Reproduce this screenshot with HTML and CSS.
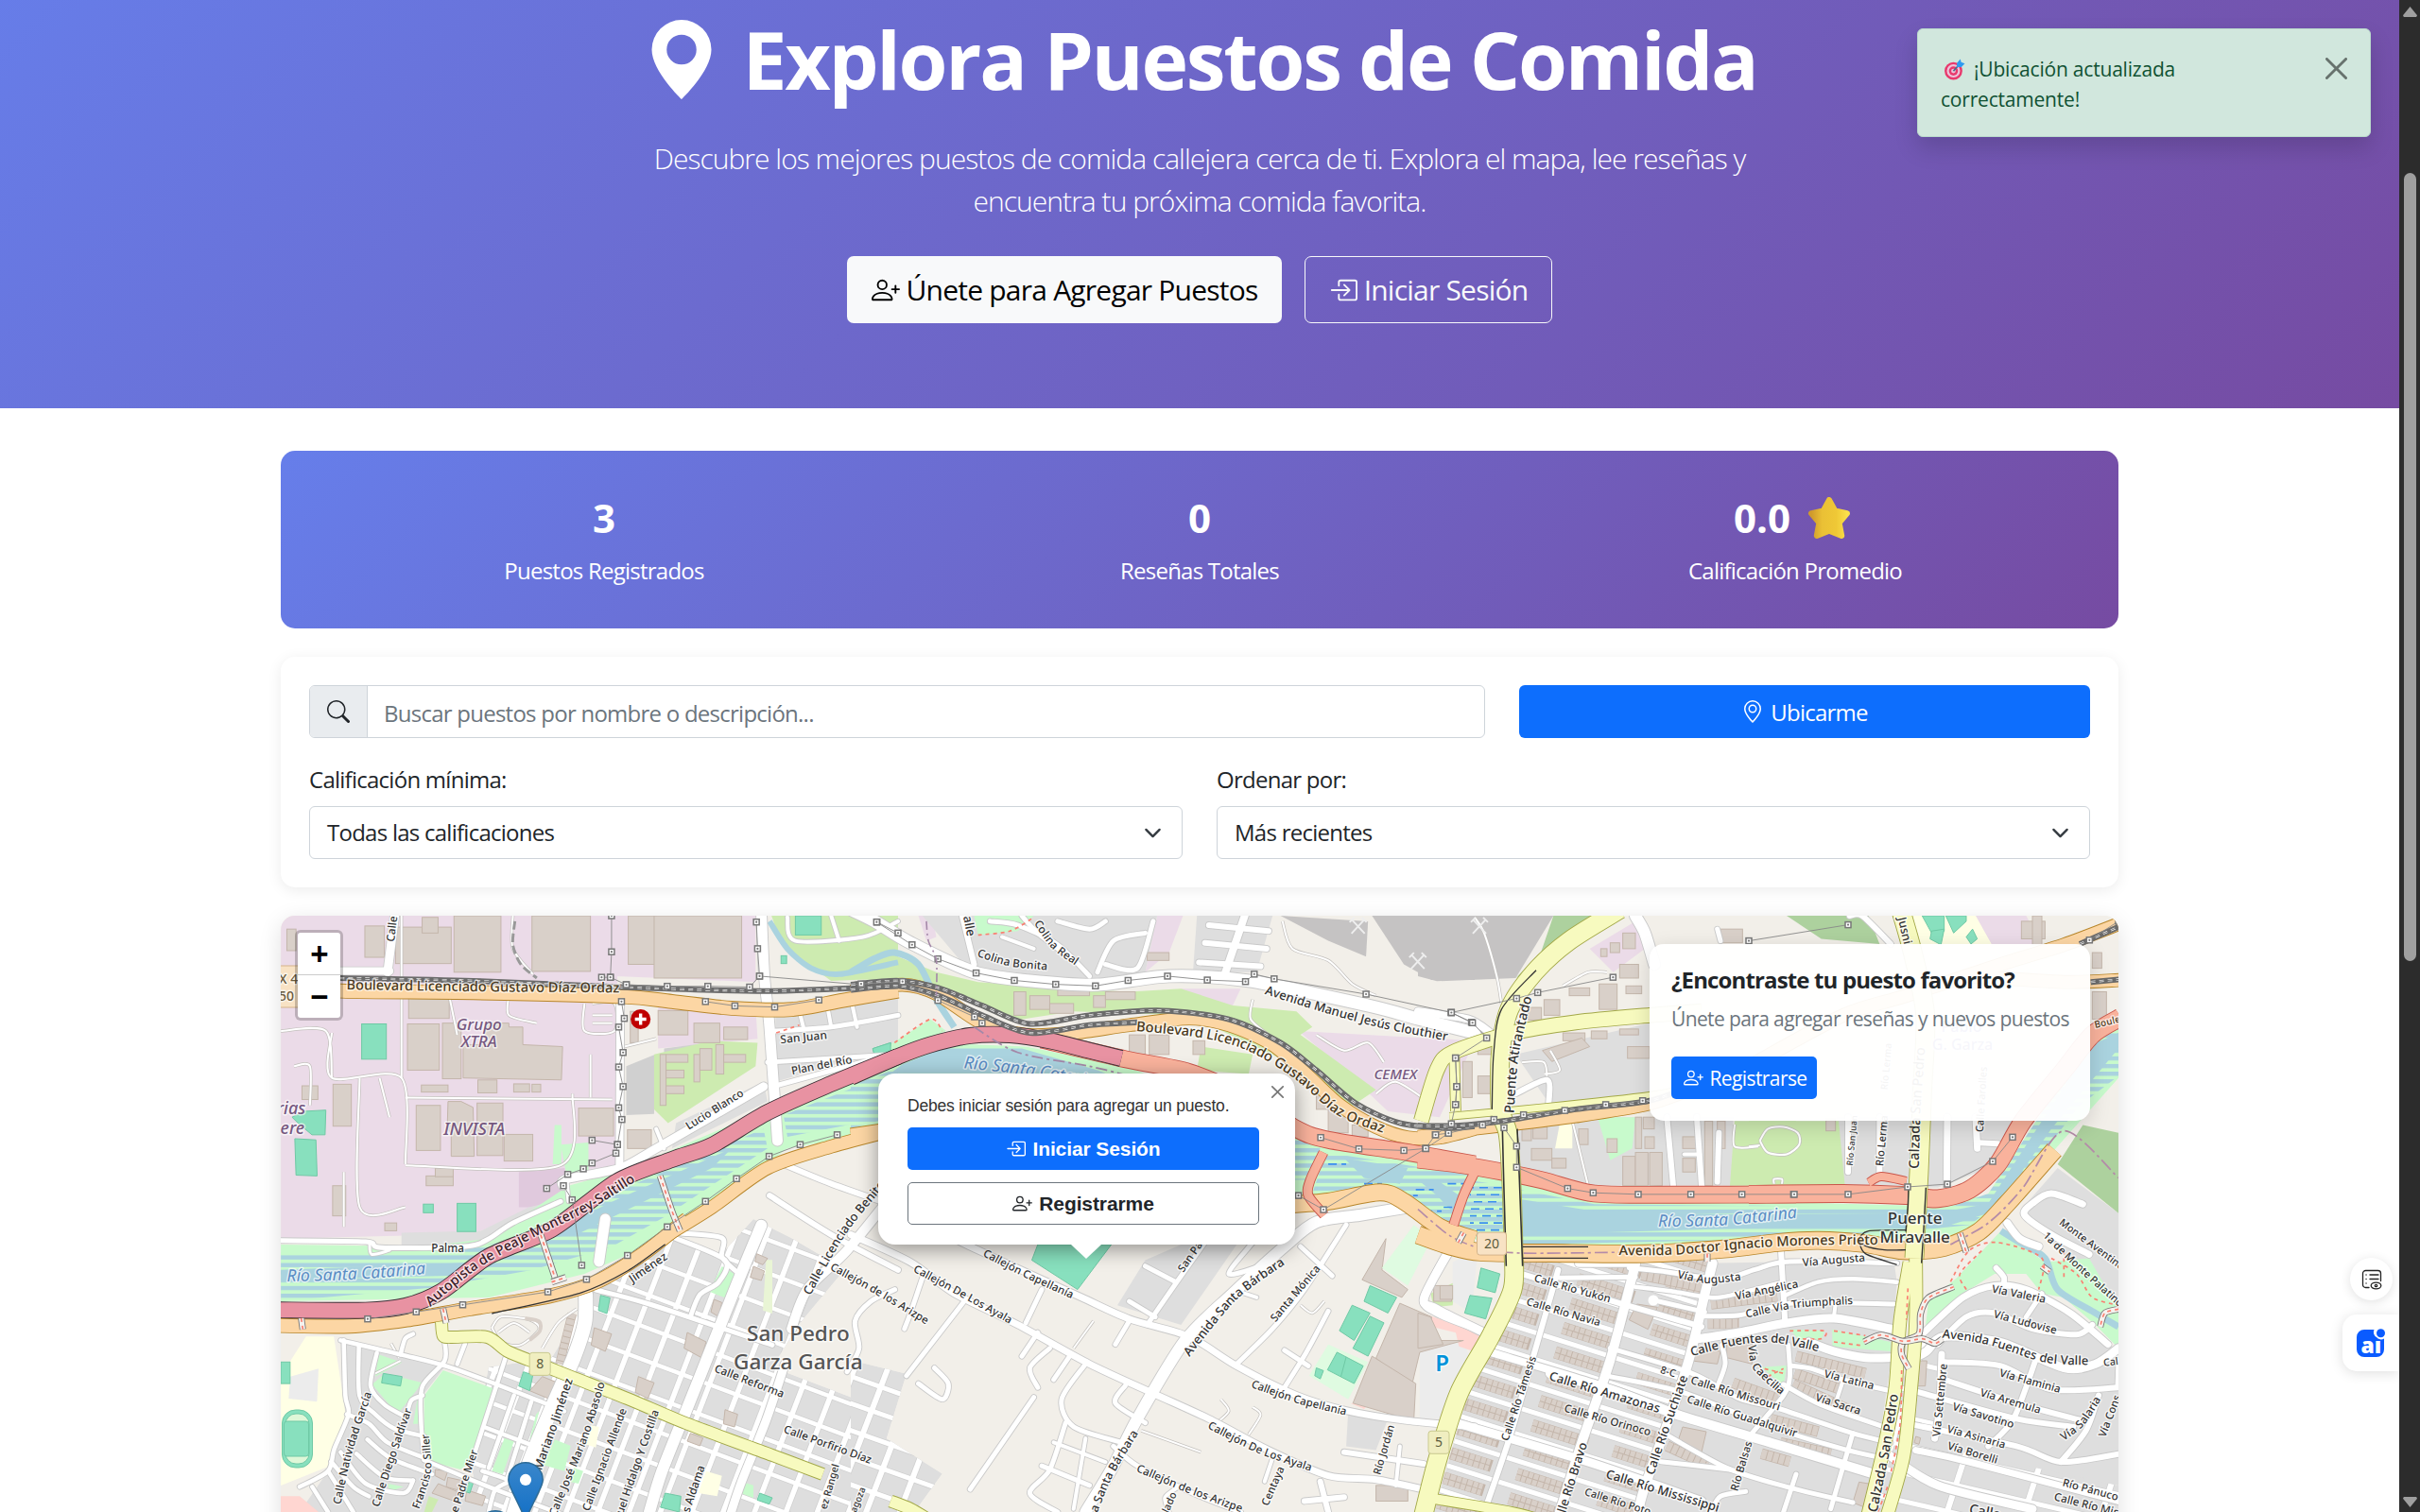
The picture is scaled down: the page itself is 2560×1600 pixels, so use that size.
FILE: index.html
```html
<!DOCTYPE html>
<html lang="es">
<head>
<meta charset="utf-8">
<title>Explora Puestos de Comida</title>
<link rel="stylesheet" href="styles.css">
</head>
<body>
<svg class="sprite" aria-hidden="true">
  <symbol id="geo-fill" viewBox="0 0 16 16"><path d="M8 16s6-5.686 6-10A6 6 0 0 0 2 6c0 4.314 6 10 6 10zm0-7a3 3 0 1 1 0-6 3 3 0 0 1 0 6z"/></symbol>
  <symbol id="geo" viewBox="0 0 16 16"><path d="M12.166 8.94c-.524 1.062-1.234 2.12-1.96 3.07A31.493 31.493 0 0 1 8 14.58a31.481 31.481 0 0 1-2.206-2.57c-.726-.95-1.436-2.008-1.96-3.07C3.304 7.867 3 6.862 3 6a5 5 0 0 1 10 0c0 .862-.305 1.867-.834 2.94zM8 16s6-5.686 6-10A6 6 0 0 0 2 6c0 4.314 6 10 6 10z"/><path d="M8 8a2 2 0 1 1 0-4 2 2 0 0 1 0 4zm0 1a3 3 0 1 0 0-6 3 3 0 0 0 0 6z"/></symbol>
  <symbol id="person-plus" viewBox="0 0 16 16"><path d="M6 8a3 3 0 1 0 0-6 3 3 0 0 0 0 6zm2-3a2 2 0 1 1-4 0 2 2 0 0 1 4 0zm4 8c0 1-1 1-1 1H1s-1 0-1-1 1-4 6-4 6 3 6 4zm-1-.004c-.001-.246-.154-.986-.832-1.664C9.516 10.68 8.289 10 6 10c-2.29 0-3.516.68-4.168 1.332-.678.678-.83 1.418-.832 1.664h10z"/><path d="M13.5 5a.5.5 0 0 1 .5.5V7h1.5a.5.5 0 0 1 0 1H14v1.5a.5.5 0 0 1-1 0V8h-1.5a.5.5 0 0 1 0-1H13V5.5a.5.5 0 0 1 .5-.5z"/></symbol>
  <symbol id="login" viewBox="0 0 16 16"><path d="M6 3.5a.5.5 0 0 1 .5-.5h8a.5.5 0 0 1 .5.5v9a.5.5 0 0 1-.5.5h-8a.5.5 0 0 1-.5-.5v-2a.5.5 0 0 0-1 0v2A1.5 1.5 0 0 0 6.500 14h8a1.500 1.500 0 0 0 1.500-1.500v-9A1.500 1.500 0 0 0 14.500 2h-8A1.500 1.500 0 0 0 5 3.500v2a.5.5 0 0 0 1 0v-2z"/><path d="M11.854 8.354a.5.5 0 0 0 0-.708l-3-3a.5.5 0 1 0-.708.708L10.293 7.500H1.500a.5.5 0 0 0 0 1h8.793l-2.147 2.146a.5.5 0 0 0 .708.708l3-3z"/></symbol>
  <symbol id="search" viewBox="0 0 16 16"><path d="M11.742 10.344a6.500 6.500 0 1 0-1.397 1.398h-.001c.03.04.062.078.098.115l3.850 3.850a1 1 0 0 0 1.415-1.414l-3.850-3.850a1.007 1.007 0 0 0-.115-.1zM12 6.500a5.500 5.500 0 1 1-11 0 5.500 5.500 0 0 1 11 0z"/></symbol>
  <symbol id="close" viewBox="0 0 16 16"><path d="M.293.293a1 1 0 0 1 1.414 0L8 6.586 14.293.293a1 1 0 1 1 1.414 1.414L9.414 8l6.293 6.293a1 1 0 0 1-1.414 1.414L8 9.414l-6.293 6.293a1 1 0 0 1-1.414-1.414L6.586 8 .293 1.707a1 1 0 0 1 0-1.414z"/></symbol>
  <symbol id="chevron" viewBox="0 0 16 16"><path d="M2 5l6 6 6-6" fill="none" stroke="#343a40" stroke-width="2" stroke-linecap="round" stroke-linejoin="round"/></symbol>
</svg>

<div class="page">
  <header class="hero">
    <h1 class="hero-title"><svg class="hero-pin"><use href="#geo-fill"/></svg><span>Explora Puestos de Comida</span></h1>
    <p class="hero-lead"><span>Descubre los mejores puestos de comida callejera cerca de ti. Explora el mapa, lee reseñas y</span><br><span>encuentra tu próxima comida favorita.</span></p>
    <div class="hero-actions">
      <a class="btn btn-lg btn-light"><svg class="icon"><use href="#person-plus"/></svg><span>Únete para Agregar Puestos</span></a>
      <a class="btn btn-lg btn-ghost"><svg class="icon"><use href="#login"/></svg><span>Iniciar Sesión</span></a>
    </div>
  </header>

  <main class="container">
    <section class="stats">
      <div class="stat"><strong>3</strong><span>Puestos Registrados</span></div>
      <div class="stat"><strong>0</strong><span>Reseñas Totales</span></div>
      <div class="stat stat-rating"><strong>0.0
        <svg class="star" viewBox="0 0 44 43"><defs><linearGradient id="gold" x1="0" y1="0" x2="1" y2="0"><stop offset="0" stop-color="#cf9a2c"/><stop offset=".3" stop-color="#eac035"/><stop offset=".7" stop-color="#efc836"/><stop offset="1" stop-color="#fbe04a"/></linearGradient></defs><path d="M22 3 28 14 40 16.500 32 26 34.500 39 22 34 9.500 39 12 26 4 16.500 16 14Z" fill="url(#gold)" stroke="url(#gold)" stroke-width="6" stroke-linejoin="round"/></svg></strong><span>Calificación Promedio</span></div>
    </section>

    <section class="filters">
      <div class="search-row">
        <div class="input-group">
          <span class="addon"><svg class="icon"><use href="#search"/></svg></span>
          <span class="field">Buscar puestos por nombre o descripción...</span>
        </div>
        <a class="btn btn-primary btn-locate"><svg class="icon"><use href="#geo"/></svg><span>Ubicarme</span></a>
      </div>
      <div class="select-row">
        <div class="select-col"><label>Calificación mínima:</label><div class="select"><span>Todas las calificaciones</span><svg><use href="#chevron"/></svg></div></div>
        <div class="select-col"><label>Ordenar por:</label><div class="select"><span>Más recientes</span><svg><use href="#chevron"/></svg></div></div>
      </div>
    </section>

    <section class="map-wrap">
      <div class="map">
        <svg id="map" class="map-canvas" viewBox="297 969 1944 900"></svg>
        <div class="zoom-control"><span>+</span><span>−</span></div>
        <svg class="marker marker-b" viewBox="0 0 25 41"><use href="#pin"/></svg>
        <svg class="marker" viewBox="0 0 25 41"><defs><linearGradient id="pinblue" x1="0" y1="0" x2="0" y2="1"><stop offset="0" stop-color="#3a87cb"/><stop offset="1" stop-color="#126fc6"/></linearGradient></defs><g id="pin"><path d="M12.500.5C5.800.5.5 5.900.5 12.500c0 2.800 1.800 6.300 2.700 8.200l9.300 19.500 9.300-19.500c.9-1.900 2.700-5.400 2.700-8.200C24.500 5.900 19.200.5 12.500.5Z" fill="url(#pinblue)" stroke="#2e6c97"/><circle cx="12.500" cy="12.500" r="4" fill="#fff"/></g></svg>
        <div class="popup">
          <svg class="popup-close"><use href="#close"/></svg>
          <p>Debes iniciar sesión para agregar un puesto.</p>
          <a class="btn btn-sm btn-primary"><svg class="icon"><use href="#login"/></svg><span>Iniciar Sesión</span></a>
          <a class="btn btn-sm btn-outline"><svg class="icon"><use href="#person-plus"/></svg><span>Registrarme</span></a>
          <i class="popup-tip"></i>
        </div>
        <div class="cta">
          <h6>¿Encontraste tu puesto favorito?</h6>
          <p>Únete para agregar reseñas y nuevos puestos</p>
          <a class="btn btn-sm btn-primary"><svg class="icon"><use href="#person-plus"/></svg><span>Registrarse</span></a>
        </div>
      </div>
    </section>
  </main>
</div>

<aside class="toast">
  <div><svg class="dart" viewBox="0 0 22 22"><circle cx="10" cy="12.500" r="9" fill="#e8396d"/><circle cx="10" cy="12.500" r="6.700" fill="#ecc4da"/><circle cx="10" cy="12.500" r="4.600" fill="#e8396d"/><circle cx="10" cy="12.500" r="2.300" fill="#ecc4da"/><path d="M10 12.500 16 6" stroke="#4a6b8a" stroke-width="1.600"/><path d="M13.500 8.500V4.500L17 .5l.8 3.200L21.500 5 18 8.500Z" fill="#2f9af0"/></svg><span>¡Ubicación actualizada</span><br><span>correctamente!</span></div>
  <svg class="toast-close"><use href="#close"/></svg>
</aside>

<div class="side-tools">
  <span class="tool-round"><svg viewBox="0 0 22 22" fill="none" stroke="#222" stroke-width="1.300" stroke-linecap="round"><path d="M8 19.500H4.500a3 3 0 0 1-3-3v-12a3 3 0 0 1 3-3h13a3 3 0 0 1 3 3V12.500"/><path d="M9 6h9M9 10.500h9M5 6h.1M5 10.500h.1M5 15h.1"/><ellipse cx="15.500" cy="17.500" rx="5.300" ry="3.300"/><circle cx="15.500" cy="17.500" r="1.200"/></svg></span>
  <span class="tool-ai"><svg viewBox="0 0 30 30"><path d="M8 1H18.500a6 6 0 0 0 2.500 8 6 6 0 0 0 8 1.500V22a8 8 0 0 1-8 8H8a8 8 0 0 1-8-8V9a8 8 0 0 1 8-8Z" fill="#0a5bff"/><circle cx="25.500" cy="4.700" r="4.500" fill="#0a5bff"/><text x="4.500" y="25.500">aı</text></svg></span>
</div>

<div class="scrollbar"><i class="arrow up"></i><i class="thumb"></i><i class="arrow down"></i></div>
<script src="map.js"></script>
</body>
</html>
```
FILE: styles.css
```css
* { box-sizing: border-box; }
html, body { height: 1600px; overflow: hidden; }
body { margin: 0; background: #fff; color: #212529; font: 24px/36px "Open Sans", "Noto Sans", sans-serif; display: flex; }
h1, h6, p { margin: 0; }
.sprite { position: absolute; width: 0; height: 0; }
.page { width: 2538px; height: 1600px; overflow: hidden; flex: none; }
.icon { width: 1em; height: 1em; fill: currentColor; flex: none; }

.hero { height: 506px; margin-top: -74px; padding-top: 90px; background: linear-gradient(135deg, #667eea 0%, #764ba2 100%); color: #fff; display: flex; flex-direction: column; align-items: center; }
.hero-title { display: flex; align-items: center; gap: 22px; height: 101px; font-size: 84px; line-height: 101px; font-weight: 700; letter-spacing: -2.300px; }
.hero-title span { margin-top: -9px; }
.hero-pin { width: 84px; height: 84px; fill: #fff; margin-top: -8px; }
.hero-lead { margin-top: 28px; text-align: center; font-size: 30px; line-height: 45px; font-weight: 300; letter-spacing: -.97px; }
.hero-actions { display: flex; gap: 24px; margin-top: 36px; }

.btn { display: flex; align-items: center; justify-content: center; gap: 7px; border: 1px solid transparent; border-radius: 6px; white-space: nowrap; letter-spacing: -.75px; }
.btn-lg { height: 71px; font-size: 30px; border-radius: 7px; letter-spacing: -.78px; padding-top: 1px; }
.btn-light { width: 460px; background: #f8f9fa; color: #000; }
.btn-ghost { width: 262px; border-color: #f8f9fa; color: #f8f9fa; }
.btn-primary { background: #0d6efd; color: #fff; }
.btn-outline { border-color: #6c757d; color: #212529; }
.btn-sm { height: 45px; font-size: 21px; border-radius: 5px; letter-spacing: -.6px; }

.container { width: 1944px; margin: 45px auto 0; display: flex; flex-direction: column; gap: 30px; }
.stats { height: 188px; border-radius: 15px; padding: 46px 27px 0; display: grid; grid-template-columns: repeat(3, 630px); background: linear-gradient(135deg, #667eea 0%, #764ba2 100%); color: #fff; text-align: center; }
.stat { display: flex; flex-direction: column; align-items: center; }
.stat strong { display: flex; align-items: center; gap: 18px; height: 50px; font-size: 42px; line-height: 50px; }
.stat-rating strong { margin-right: 6px; }
.star { width: 46px; height: 45px; }
.stat span { margin-top: 13px; letter-spacing: -.76px; }

.filters { height: 244px; border-radius: 15px; padding: 30px; background: #fff; box-shadow: 0 3px 15px rgba(0,0,0,.08); }
.search-row { display: flex; gap: 36px; }
.input-group { display: flex; width: 1244px; height: 56px; border: 1px solid #ced4da; border-radius: 6px; overflow: hidden; }
.addon { width: 61px; background: #e9ecef; border-right: 1px solid #ced4da; display: flex; align-items: center; justify-content: center; }
.field { padding: 11px 17px; color: #6c757d; letter-spacing: -.75px; }
.btn-locate { width: 604px; height: 56px; }
.btn-locate span { padding-top: 2px; }
.select-row { display: flex; gap: 36px; margin-top: 26px; }
.select-col { width: 924px; letter-spacing: -.74px; }
.select-col label { display: block; height: 46px; }
.select { height: 56px; border: 1px solid #ced4da; border-radius: 6px; display: flex; align-items: center; justify-content: space-between; padding: 0 21px 0 18px; }
.select svg { width: 19px; height: 19px; }

.map-wrap { height: 900px; border-radius: 15px; box-shadow: 0 6px 24px rgba(0,0,0,.12); }
.map { position: relative; height: 900px; border-radius: 15px; overflow: hidden; background: #f2efe9; }
.map-canvas { display: block; width: 1944px; height: 900px; font-family: "Noto Sans", sans-serif; }
.map-canvas text { paint-order: stroke; stroke: rgba(255,255,255,.65); stroke-width: 3px; stroke-linejoin: round; }
.zoom-control { position: absolute; left: 15px; top: 15px; width: 51px; border: 3px solid rgba(0,0,0,.2); border-radius: 6px; background: #fff; background-clip: padding-box; }
.zoom-control span { display: block; height: 45px; padding-left: 1px; text-align: center; font: bold 33px/45px "Liberation Sans", sans-serif; color: #000; }
.zoom-control span:first-child { border-bottom: 1px solid #ccc; }
.marker { position: absolute; left: 240px; top: 578px; width: 38px; height: 62px; }
.marker-b { left: 208px; top: 629px; }

.popup { position: absolute; left: 632px; top: 167px; width: 441px; height: 181px; border-radius: 18px; background: #fff; box-shadow: 0 5px 21px rgba(0,0,0,.4); padding: 24px 38px 0 31px; display: flex; flex-direction: column; gap: 13px; font-family: "Liberation Sans", sans-serif; }
.popup p { font-size: 17.500px; line-height: 21px; color: #333; letter-spacing: -.18px; margin-bottom: -1px; white-space: nowrap; }
.popup .btn { font-weight: 700; letter-spacing: -.1px; flex: none; }
.popup-close { position: absolute; right: 12px; top: 13px; width: 13px; height: 13px; fill: #757575; }
.popup-tip { position: absolute; left: 204px; top: 181px; width: 32px; height: 15px; background: #fff; clip-path: polygon(0 0, 100% 0, 50% 100%); }
.cta { position: absolute; left: 1448px; top: 30px; width: 466px; height: 187px; padding: 20px 23px; border-radius: 15px; background: rgba(255,255,255,.95); box-shadow: 0 6px 22px rgba(0,0,0,.15); white-space: nowrap; }
.cta h6 { font-size: 24px; line-height: 36px; letter-spacing: -.86px; }
.cta p { font-size: 21px; line-height: 32px; margin-top: 7px; color: #6c757d; letter-spacing: -.62px; }
.cta .btn { width: 154px; margin-top: 24px; padding-left: 2px; }

.toast { position: absolute; left: 2028px; top: 30px; width: 480px; height: 115px; padding: 26px 24px 0; display: flex; justify-content: space-between; background: #d1e7dd; border: 1px solid #badbcc; border-radius: 6px; color: #0f5132; font-size: 21px; line-height: 32px; letter-spacing: -.2px; box-shadow: 0 12px 24px rgba(0,0,0,.15); }
.dart { width: 23px; height: 23px; margin: 0 9px 0 3px; vertical-align: -4px; }
.toast-close { width: 23px; height: 23px; margin-top: 4px; opacity: .5; }

.side-tools { position: absolute; right: 22px; top: 1331px; display: flex; flex-direction: column; align-items: flex-end; gap: 15px; }
.tool-round { width: 45px; height: 45px; margin-right: 7px; border-radius: 50%; background: #fff; box-shadow: 0 2px 12px rgba(0,0,0,.12); display: grid; place-items: center; }
.tool-round svg { width: 22px; height: 22px; }
.tool-ai { width: 60px; height: 60px; border-radius: 15px 0 0 15px; background: #fff; box-shadow: 0 2px 14px rgba(0,0,0,.13); padding: 15px; }
.tool-ai svg { display: block; width: 30px; height: 30px; overflow: visible; }
.tool-ai text { font: 800 23px "Open Sans", sans-serif; fill: #fff; }
.scrollbar { position: relative; width: 22px; height: 1600px; background: #2c2c2c; flex: none; }
.thumb { position: absolute; left: 5px; top: 183px; width: 13px; height: 834px; border-radius: 7px; background: #9f9f9f; }
.arrow { position: absolute; left: 4px; width: 15px; height: 11px; background: #9f9f9f; clip-path: polygon(50% 0, 100% 85%, 94% 100%, 6% 100%, 0 85%); }
.up { top: 7px; }
.down { bottom: 5px; transform: scaleY(-1); }
```
FILE: map.js
```js
// Street map: survey sheets (origin and scale) and the features drawn on them.
const NS = 'http://www.w3.org/2000/svg';
const svg = document.getElementById('map');
const sheets = { W: [290, 950, 2.3758, 2.412], C: [900, 950, 2.3758, 2.412], E: [1500, 950, 3, 2.412], F: [1850, 950, 3, 2.412], Q: [297, 1290, 3, 3], R: [1640, 1190, 3, 3] };
let uid = 0;

function el(name, attrs, parent = svg) {
  const node = document.createElementNS(NS, name);
  for (const k in attrs) node.setAttribute(k, attrs[k]);
  parent.appendChild(node);
  return node;
}
function pts(sheet, str) {
  const [ox, oy, sx, sy] = sheets[sheet];
  return str.trim().split(/\s+/).map(p => { const [x, y] = p.split(','); return [ox + x / sx, oy + y / sy]; });
}
function smooth(p) {
  if (p.length < 3) return 'M' + p.map(q => q.join(' ')).join('L');
  let d = 'M' + p[0].join(' ');
  for (let i = 0; i < p.length - 1; i++) {
    const a = p[i - 1] || p[i], b = p[i], c = p[i + 1], e = p[i + 2] || c, t = 7;
    d += `C${b[0] + (c[0] - a[0]) / t} ${b[1] + (c[1] - a[1]) / t} ${c[0] - (e[0] - b[0]) / t} ${c[1] - (e[1] - b[1]) / t} ${c[0]} ${c[1]}`;
  }
  return d;
}
function area(fill, list, stroke = 'none') {
  list.forEach(([s, str]) => el('polygon', { points: pts(s, str).map(q => q.join(',')).join(' '), fill, stroke, 'stroke-width': 1 }));
}
function boxes(fill, stroke, s, list) {
  list.trim().split(/\s+/).forEach(b => {
    const [x1, y1, x2, y2] = b.split(',');
    const [[a, c], [d, e]] = pts(s, `${x1},${y1} ${x2},${y2}`);
    el('rect', { x: a, y: c, width: d - a, height: e - c, fill, stroke });
  });
}
function line(s, str, w, color, extra = {}) {
  return el('path', { d: smooth(pts(s, str)), fill: 'none', stroke: color, 'stroke-width': w, 'stroke-linejoin': 'round', ...extra });
}
function roads(color, casing, list, cap = 'round') {
  list.forEach(([s, w, str]) => line(s, str, w + 1.8, casing, { 'stroke-linecap': cap }));
  list.forEach(([s, w, str]) => line(s, str, w, color, { 'stroke-linecap': cap }));
}
// Rows of terraced houses along a line.
function terraces(s, w, list) {
  list.forEach(p => {
    line(s, p, w + 1.4, '#c4b6ab');
    line(s, p, w, '#d9d0c9', { 'stroke-dasharray': '5.5 1' });
  });
}
// A residential district: blocks, rows of houses and a skewed street grid clipped to its outline.
function district(s, outline, a, da, b, db, w, houses) {
  const p = pts(s, outline), id = 'd' + uid++;
  const clip = el('clipPath', { id });
  el('polygon', { points: p.map(q => q.join(',')).join(' ') }, clip);
  const g = el('g', { 'clip-path': `url(#${id})` });
  el('polygon', { points: p.map(q => q.join(',')).join(' '), fill: '#dedede' }, g);
  const cx = p.reduce((t, q) => t + q[0], 0) / p.length, cy = p.reduce((t, q) => t + q[1], 0) / p.length;
  const set = (ang, gap, width, color, shift, dash) => {
    const r = ang * Math.PI / 180, ux = Math.cos(r), uy = Math.sin(r);
    for (let k = -18; k <= 18; k++) {
      const o = k * gap + shift, x = cx - uy * o, y = cy + ux * o;
      el('line', { x1: x - ux * 500, y1: y - uy * 500, x2: x + ux * 500, y2: y + uy * 500, stroke: color, 'stroke-width': width, 'stroke-dasharray': dash || 'none' }, g);
    }
  };
  if (houses) {
    set(a, da, 13, '#c4b6ab', da / 2, '62 28');
    set(a, da, 5.6, '#d9d0c9', da / 2 - 3.3, '5 1 5.5 1 4.5 1 5 1 6 1 5 1 5 1 5.500 1 5 1 4 30.500');
    set(a, da, 5.6, '#d9d0c9', da / 2 + 3.3, '5 1 4.500 1 5.5 1 5 1 6 1 5 1 5 1 5.500 1 5 1 4 30.500');
  }
  set(a, da, w + 1.5, '#cfcfcf', 0);
  if (db) set(b, db, w + 2.5, '#cfcfcf', 0);
  set(a, da, w, '#fff', 0);
  if (db) set(b, db, w + 1, '#fff', 0);
}
function label(s, str, text, color = '#333', weight = 500, style = 'normal') {
  const id = 'l' + uid++;
  const path = el('path', { id, d: smooth(pts(s, str)), fill: 'none' });
  const t = el('text', { 'font-size': 15, fill: color, 'font-weight': weight, 'font-style': style, dy: '.34em' });
  const span = el('textPath', { href: '#' + id }, t);
  const probe = el('text', { 'font-size': 15, 'font-weight': weight, 'font-style': style });
  probe.textContent = text;
  t.setAttribute('font-size', (14.9 * path.getTotalLength() / probe.getComputedTextLength()).toFixed(2));
  probe.remove();
  span.textContent = text;
}
function place(s, x, y, size, text, color, style = 'normal') {
  const [[px, py]] = pts(s, `${x},${y}`);
  el('text', { x: px, y: py, 'font-size': size, 'text-anchor': 'middle', fill: color, 'font-weight': 500, 'font-style': style, dy: '.35em' }).textContent = text;
}

const defs = el('defs', {});
const stripes = el('pattern', { id: 'stripes', width: 8, height: 8.1, patternUnits: 'userSpaceOnUse' }, defs);
el('rect', { width: 8, height: 8.1, fill: '#c8facc' }, stripes);
el('rect', { width: 8, height: 4.4, fill: '#aad3df' }, stripes);

// Land use
area('#f2efe9', [['W', '0,0 6000,0 6000,2300 0,2300']]);
area('#ebdbe8', [['W', '17,46 860,46 870,700 720,720 640,800 520,850 330,862 17,870'], ['W', '860,46 1210,46 1210,215 860,200'], ['W', '965,270 1210,280 1215,360 965,385'],
  ['C', '170,46 205,46 215,100 190,110'], ['C', '770,46 835,46 800,140 740,190'], ['C', '830,232 980,232 960,275 880,285'], ['C', '1125,340 1568,365 1480,560 1350,545 1230,430'],
  ['E', '545,130 690,60 720,130 620,190'], ['F', '715,46 880,46 930,118 770,118']]);
area('#e0c9dd', [['W', '615,700 730,690 740,760 690,790 615,790']]);
area('#dedede', [['W', '320,855 520,850 640,790 740,765 740,780 560,880 320,890'], ['C', '180,46 770,46 740,190 600,215 300,190'], ['C', '870,46 1060,46 1020,190 860,190'],
  ['C', '740,925 830,885 970,885 830,1090 670,1040'], ['C', '1250,1315 1350,1330 1320,1410 1245,1400'], ['W', '1260,290 1568,250 1568,380 1260,470'], ['W', '1010,575 1230,470 1240,520 1000,640'],
  ['E', '320,560 1000,560 1000,735 560,735 320,690'], ['E', '310,400 735,320 735,500 420,530'], ['F', '280,560 850,560 760,690 600,740 300,735'], ['F', '860,800 980,690 1173,805 1173,1050'],
  ['Q', '190,385 520,470 450,560 440,660 460,770 650,850 660,930 60,930 150,800 200,620']]);
area('#d0d0d0', [['W', '885,430 958,400 955,552 885,555'], ['W', '980,385 1090,370 1080,430 980,440']]);
area('#c5c3c3', [['C', '1080,46 1300,60 1295,150 1200,110'], ['C', '1310,46 1568,46 1568,210 1460,210 1390,170'], ['E', '0,46 430,46 310,205 60,213 0,200']]);
area('#cdebb0', [['W', '1250,46 1275,120 1400,212 1568,205 1568,46 1440,46'], ['W', '955,400 1100,365 1215,370 1210,430 990,575 955,540'], ['C', '0,90 70,130 215,190 320,215 600,235 700,240 830,232 960,275 1120,290 1160,330 1130,350 1320,490 1240,545 1100,420 850,300 560,290 400,315 220,225 0,205'],
  ['C', '880,380 1010,400 1000,450 870,440'], ['E', '1005,570 1200,570 1200,735 990,735'], ['F', '0,570 285,570 305,735 0,735'], ['E', '40,1010 120,980 110,1040 50,1045'], ['Q', '470,880 500,890 480,930 455,930']]);
area('#add19e', [['E', '430,46 600,46 500,110 310,205 390,140'], ['F', '120,46 380,46 415,118 230,105'], ['F', '980,680 1060,580 1173,600 1173,805']]);
area('#c8facc', [['W', '17,885 380,890 540,870 740,735 880,695 1240,540 1568,400 1568,590 1290,640 980,870 780,960 540,1020 17,1030'], ['W', '720,630 790,625 790,700 735,710'], ['W', '705,580 722,580 722,680 700,680'],
  ['C', '310,46 460,46 420,85 320,95'], ['C', '60,400 200,310 240,340 100,400'], ['C', '0,440 200,370 440,380 690,430 1130,600 1568,700 1568,880 1400,760 1100,790 0,600'],
  ['E', '0,690 270,715 560,775 1200,780 1200,885 330,890 200,880 0,790'], ['F', '0,775 500,785 760,760 920,560 1080,360 1173,320 1173,460 830,770 680,860 500,870 0,880'],
  ['E', '570,560 690,560 680,640 610,670']]);
area('#ffffe5', [['W', '80,1120 150,1120 180,1320 140,1450 17,1500 17,1220'], ['F', '500,46 720,46 770,118 520,118'], ['E', '450,575 490,575 490,640 435,640']]);
area('#ececec', [['C', '1430,1150 1540,1130 1568,1210 1510,1330 1430,1330'], ['Q', '30,500 120,475 115,580 25,570'], ['E', '110,930 190,900 170,1060 110,1030']]);
area('#ffd6d1', [['E', '30,1065 200,1110 185,1160 130,1145 120,1110 45,1095'], ['C', '1255,1290 1300,1295 1290,1305'], ['Q', '0,880 60,880 120,930 0,930']]);

// Districts
district('Q', '660,470 860,440 1000,210 1250,60 1400,110 1500,0 1620,60 1790,160 1640,340 1560,470 1900,600 1900,960 640,960 600,760', 20.5, 33, -69, 31, 4.5, false);
district('C', '0,1180 140,1215 90,1380 230,1470 160,1568 0,1568', 19.5, 27, -69, 33, 5, false);
district('E', '340,920 940,905 870,1160 800,1300 1130,1568 50,1568 150,1290 250,1110', 17.5, 27, -72, 0, 5, true);
area('#dedede', [['R', '500,440 1090,430 1100,500 1080,760 1010,1230 290,1230 430,780']]);
district('F', '560,1120 620,1185 590,1380 1173,1500 1173,1568 380,1568 480,1240', 13, 29, -72, 78, 5, false);
area('#dedede', [['F', '560,1110 700,1010 800,980 950,1030 1173,1160 1173,1500 590,1400 610,1180']]);
area('#c8facc', [['F', '560,1100 570,1030 660,970 800,850 940,930 1080,920 1173,1050 1173,1150 1100,1090 1000,1020 930,1010 880,960 780,960 700,1000'], ['R', '760,650 870,655 860,685 790,685'], ['R', '895,650 1080,690 1080,720 895,705'], ['R', '670,770 750,765 740,830'],
  ['Q', '515,480 680,540 610,765 570,795 455,765 455,560'], ['Q', '310,430 385,455 300,500'], ['Q', '290,525 330,490 450,520 370,620'], ['Q', '435,565 420,650 440,650'], ['Q', '1400,150 1450,180 1410,250 1360,230'], ['Q', '710,695 740,705 705,810 670,800'], ['Q', '870,700 920,720 900,800 830,780'], ['Q', '930,790 960,800 945,840 920,835'], ['Q', '820,610 800,690 790,700 810,620'], ['Q', '340,840 390,850 345,865'], ['Q', '1450,830 1500,845 1500,885 1460,870']]);
area('#ffffe5', [['Q', '985,655 1010,660 1000,725 965,715'], ['Q', '1350,800 1400,815 1385,880 1325,870']]);
area('#e9f5d5', [['Q', '1540,130 1560,130 1560,300 1530,290']]);

// Water
area('url(#stripes)', [['W', '17,905 400,905 640,870 860,750 1230,590 1240,640 980,815 850,890 650,950 400,995 17,1030'], ['W', '1280,555 1568,440 1568,555 1290,610'],
  ['C', '0,480 119,435 119,555 0,590'], ['C', '1100,590 1180,640 1150,720 1100,720'], ['C', '1195,650 1568,710 1500,840 1440,810 1350,740 1160,755'],
  ['E', '0,700 140,710 105,840 0,790'], ['E', '170,722 275,735 280,900 125,845'], ['E', '320,745 560,782 1200,788 1200,870 330,885'], ['F', '0,785 500,793 620,795 760,755 920,560 1080,370 1173,320 1173,455 1050,530 830,760 700,835 520,850 0,870']]);
area('#aad3df', [['W', '17,950 390,935 520,930 440,965 17,975'], ['W', '660,870 840,780 1150,640 1100,690 880,800 760,860'], ['C', '130,425 230,385 430,385 620,440 640,448 100,448'], ['C', '1240,665 1400,690 1380,730 1290,715'], ['E', '0,720 60,720 130,760 120,810 60,760'],
  ['E', '330,770 560,800 1200,812 1200,840 330,860'], ['F', '0,808 600,805 760,780 930,570 1090,375 1173,345 1173,385 960,590 780,800 640,835 0,840']]);
[[1200, 680], [1290, 730], [1380, 760], [1450, 690], [1420, 745], [1500, 730], [1490, 790], [1440, 800]].forEach(([x, y]) => line('C', `${x},${y} ${x + 45},${y}`, 1.6, '#3a8df0', { 'stroke-dasharray': '9 5' }));
for (let y = 740; y < 850; y += 18) line('E', `165,${y} 268,${y}`, 1.6, '#3a8df0', { 'stroke-dasharray': '9 6', 'stroke-dashoffset': y });
line('W', '1245,60 1290,130 1350,180 1420,195 1568,165', 6, '#aad3df');
line('C', '0,190 60,155 110,140 170,170 215,260 260,330', 7, '#aad3df');
line('F', '800,850 860,880 940,920 980,1000 1100,1060 1173,1095', 7, '#aad3df');

// Buildings and pitches
const B = '#d9d0c9', BS = '#c4b6ab';
boxes(B, BS, 'W', '305,75,445,168 372,50,412,90 452,46,570,190 648,46,795,188 890,46,960,170 955,46,1175,205 228,72,277,152 32,80,55,135 338,255,440,308 335,322,415,440 423,320,470,462 148,476,194,583 357,530,418,645 510,524,575,658 578,604,650,672 765,537,853,608 888,592,948,640 147,735,180,812 382,710,450,735 405,690,450,712 370,478,437,496 602,475,642,496 648,476,670,496 512,465,560,498 965,288,1040,350 1055,320,1120,370 1130,330,1190,362 70,480,110,515 278,830,308,850 970,400,985,530 985,400,1040,420 985,440,1030,460 985,480,1030,500 1055,400,1070,470 1070,385,1100,440 1110,375,1130,450 1130,400,1185,420 895,290,915,370');
area(B, [['W', '475,460 475,375 530,375 530,320 590,320 590,330 625,330 625,375 725,380 722,465'], ['W', '437,520 470,520 500,535 503,660 445,660 445,600 435,590'], ['Q', '995,345 1050,365 1030,420 985,400'], ['Q', '1375,255 1400,265 1390,310 1365,295'], ['Q', '1290,360 1350,390 1335,440 1280,410'], ['Q', '1135,500 1185,520 1165,570 1125,550'], ['Q', '1410,605 1450,620 1440,660 1405,650'], ['Q', '1300,680 1340,695 1330,720 1290,705'], ['Q', '830,500 880,520 850,570 790,545'], ['Q', '490,795 530,800 520,830 490,815'], ['Q', '530,820 575,830 560,860 525,850'], ['Q', '500,840 560,865 550,895 480,870'], ['Q', '590,860 650,880 640,910 585,895'], ['Q', '1500,150 1535,165 1525,195 1490,185'], ['Q', '1510,110 1545,125 1530,145 1505,135']], BS);
boxes(B, BS, 'C', '410,240,440,300 450,250,500,285 520,235,600,250 500,270,560,295 610,250,640,280 640,240,715,260 700,350,740,400 750,350,800,400 860,365,890,400 745,140,800,160 1170,500,1220,540 1200,540,1250,600 1260,580,1300,610 1465,990,1510,1030 1320,1500,1400,1540');
boxes(B, BS, 'E', '142,418,172,510 190,340,245,400 575,220,632,285 350,280,392,312 400,260,450,300 480,230,545,250 580,130,600,150 610,115,640,140 650,90,690,130 640,170,700,205 660,225,710,245 960,80,1030,115 460,345,530,365 550,340,600,360 640,335,700,350 665,380,735,410 190,455,245,500 330,585,360,620 365,585,410,615 360,640,425,670 425,665,470,690 510,590,540,630 600,615,632,650 690,560,710,640 715,560,750,590 720,610,750,640 650,660,690,735 690,650,730,735 735,650,775,735 840,610,885,640 840,665,880,700 910,570,935,735 950,570,975,640 70,990,110,1025');
boxes(B, BS, 'F', '865,60,940,105 900,46,930,120 1090,140,1120,180 1090,240,1135,310 245,565,275,595');
area(B, [['C', '1345,870 1335,950 1400,1000 1385,1020 1285,975'], ['C', '1380,1035 1460,1070 1450,1130 1540,1130 1430,1160 1410,1245 1320,1175'], ['C', '1310,1170 1420,1240 1415,1335 1262,1290'], ['E', '395,390 520,358 545,380 425,418'], ['E', '0,1060 40,1070 80,1140 0,1150'],
  ['R', '275,570 340,580 310,650 250,620'], ['R', '440,700 490,710 540,720 530,760 450,750'], ['R', '560,680 640,690 640,760 560,740'], ['R', '1170,750 1195,750 1190,830 1165,830'], ['R', '1160,990 1175,995 1170,1015 1155,1010'], ['R', '980,1135 1040,1145 1010,1220 960,1200'], ['R', '420,960 495,975 480,1040 400,1020']], BS);
terraces('Q', 8, ['925,300 900,400 885,460']);
terraces('R', 10, ['290,478 480,515', '510,570 720,545', '500,632 600,632', '780,735 1000,790', '775,790 920,840', '770,825 980,920', '700,935 850,975', '730,1010 890,1045', '670,1045 760,1070', '370,1020 500,1080', '580,820 720,870']);
const P = '#88e0be', PS = '#6fc9a5';
boxes(P, PS, 'W', '220,322,282,412 375,782,400,804 460,780,507,852 1310,46,1375,95 1274,148,1288,168 17,1185,40,1240');
area(P, [['W', '52,615 105,618 108,710 55,708'], ['W', '45,560 75,545 130,542 128,605 95,605 60,575'], ['C', '470,885 655,885 570,1000 455,925'], ['C', '1305,990 1372,1020 1350,1060 1290,1030'], ['C', '1260,1040 1305,1060 1265,1130 1228,1105'], ['C', '1305,1068 1340,1085 1300,1170 1262,1150'],
  ['E', '200,945 260,960 245,1008 188,995'], ['E', '165,1015 235,1022 215,1075 148,1060'], ['F', '550,46 620,46 620,85 580,90'], ['F', '625,46 690,46 690,60 650,90'], ['F', '580,85 620,80 610,120 575,105'], ['F', '690,100 710,80 725,105 705,118'], ['Q', '325,490 385,500 380,530 320,520'], ['Q', '770,485 800,495 790,545 755,530'], ['Q', '1015,242 1045,250 1035,300 1008,290'], ['Q', '1220,870 1270,880 1265,930 1205,915'], ['Q', '1520,870 1560,885 1550,905 1512,892'], ['Q', '600,830 610,840 600,870 585,865'], ['W', '1505,385 1550,370 1545,400 1510,405'], ['C', '55,385 100,370 100,400 60,405']], PS);
area('#dffbe1', [['C', '1415,835 1460,870 1400,990 1335,945'], ['C', '1200,1140 1300,1185 1250,1280 1152,1220']]);
area(P, [['C', '1222,1160 1288,1195 1265,1240 1198,1205'], ['C', '1170,1200 1188,1207 1180,1228 1166,1220']], PS);
line('C', '1245,1172 1232,1222', 1, PS);
[[64, 52, 188, 31, P, PS], [52, 640, 150, 24, '#ffffe5', PS]].slice(0, 1).forEach(() => {
  el('rect', { x: 298.5, y: 1492, width: 32, height: 61, rx: 14, fill: P, stroke: PS });
  el('rect', { x: 302, y: 1496, width: 25, height: 53, rx: 11, fill: '#dff7d8', stroke: PS });
  el('rect', { x: 300.500, y: 1504, width: 26, height: 37, rx: 3, fill: P, stroke: PS });
});

// Service lanes
const lanes = [['W', '145,345 145,460 320,460 330,680'], ['W', '320,46 320,460'], ['W', '330,510 850,515'], ['W', '800,270 855,270 855,340 780,340 780,270'], ['W', '795,400 795,510'], ['W', '330,683 720,683 750,500'], ['W', '215,460 215,790 330,790'], ['W', '17,340 130,340 145,460'], ['W', '265,460 290,560'], ['W', '590,250 590,300 660,320'], ['W', '460,350 440,250'], ['W', '800,320 850,320'], ['W', '800,300 850,300'], ['W', '50,430 90,430 90,530'], ['W', '175,700 175,840'], ['W', '600,46 600,130 650,195'], ['W', '880,380 960,360'], ['Q', '670,345 700,310 790,320 820,350 760,400 700,390 670,345'], ['Q', '690,360 740,330 790,360'], ['Q', '830,410 880,330 940,285'],
  ['C', '1085,60 1110,130 1200,160 1260,220 1320,250'], ['C', '1170,350 1240,390 1300,370 1340,420'], ['C', '1320,500 1370,470 1450,520'], ['C', '1010,260 1005,310 1050,350'], ['C', '730,1360 880,1415'], ['C', '930,1280 950,1310 920,1340'], ['C', '1010,1300 1030,1320 1000,1370'], ['C', '610,1080 560,1150'], ['C', '1190,1030 1160,1060 1130,1040'],
  ['E', '180,50 210,90 250,200 265,270'], ['E', '460,225 540,190 600,190'], ['E', '420,390 450,440 400,450'], ['E', '490,570 540,735'], ['E', '330,420 400,420 410,470'], ['F', '0,635 35,632'], ['F', '35,620 60,590 110,585 155,600 160,630 120,655 60,650 35,620'], ['F', '80,730 80,718 105,718 105,730'],
  ['R', '585,0 585,70 660,70'], ['Q', '300,490 380,450'], ['Q', '350,395 375,440']];
lanes.forEach(([s, p]) => line(s, p, 3.4, '#c3c0bd'));
lanes.forEach(([s, p]) => line(s, p, 2, '#fff'));
line('Q', '775,315 820,325 822,355 790,385', 4, B);

// Residential and tertiary roads
roads('#fff', '#c9c9c9', [
  ['W', 5, '17,875 230,878 270,893 480,890 540,870 600,830 720,775'], ['W', 3, '240,880 245,910 290,900'], ['W', 9, '303,46 285,190'], ['W', 8, '165,187 290,187'], ['W', 8, '870,250 868,700'], ['W', 9, '725,735 735,718 870,690 960,640 1230,482'],
  ['W', 4, '735,720 740,775'], ['W', 5, '1240,420 1568,400'], ['W', 5, '1260,340 1400,330 1568,300'], ['W', 4, '1320,290 1330,330'], ['W', 4, '1390,275 1400,330'], ['W', 4, '1450,260 1465,330'], ['W', 5, '1260,480 1568,395'], ['W', 4, '960,590 980,640'],
  ['Q', 11, '1030,0 1015,100 1010,135'], ['Q', 15, '968,240 965,330 930,440 860,600 790,770 740,930'], ['Q', 12, '1525,20 1450,200 1370,400 1290,600 1210,800 1170,930'], ['Q', 9, '1600,460 1540,640 1460,840 1420,960'],
  ['Q', 4.500, '190,385 380,430 550,475 840,585 900,610'], ['Q', 4.500, '200,385 205,560 215,620 170,730 150,800 60,850'], ['Q', 4.500, '248,400 250,560 300,620 360,665 455,690'], ['Q', 4.500, '305,425 285,530 330,590 400,630'], ['Q', 4.500, '520,390 520,450 450,530 445,640 455,765'], ['Q', 4.500, '455,765 660,850 900,940'], ['Q', 4.500, '400,620 415,575 450,560'],
  ['Q', 4.500, '210,620 280,650 340,710 460,760'], ['Q', 4.500, '275,700 350,760 480,810'], ['Q', 4.500, '240,745 330,820 420,830'], ['Q', 4.500, '190,740 270,840 390,870 420,830'], ['Q', 4.500, '160,770 230,850 280,880'], ['Q', 4.500, '150,800 200,880 230,930'], ['Q', 4.500, '100,850 150,930'], ['Q', 4.500, '585,395 560,460'], ['Q', 4.500, '715,435 610,760'], ['Q', 4.500, '380,430 395,380 420,365'], ['Q', 4.500, '645,660 790,715'], ['Q', 4.500, '740,560 660,790'], ['Q', 4.500, '795,580 720,820'], ['Q', 4.500, '640,800 720,830 680,860 660,930'],
  ['W', 11, '1225,46 1232,200 1245,330 1265,620'], ['W', 10, '1568,740 1440,900 1340,1000 1300,1100'],
  ['W', 6, '1280,680 1400,730 1568,790'], ['W', 6, '1245,760 1400,860 1568,950'], ['W', 5, '1560,1000 1500,1030 1460,1080 1470,1150 1440,1210'],
  ['W', 4, '1290,50 1310,110 1480,100 1568,60'], ['W', 4, '1400,46 1420,110'], ['Q', 5, '1000,225 1170,270 1560,400'], ['Q', 5, '1250,60 1410,130 1390,200 1330,240 1300,310'], ['Q', 5, '1270,45 1400,60 1400,120 1450,170'],
  ['C', 13, '0,30 60,60 150,115 310,190 450,212 620,222 800,200 1000,212 1300,275 1430,310 1568,345'], ['C', 6, '280,46 310,170'], ['C', 5, '350,60 420,70 520,120 600,200'], ['C', 5, '430,46 470,90 560,160'], ['C', 5, '520,60 600,80 640,60'], ['C', 4, '380,100 460,130'], ['C', 5, '640,170 720,180 760,60'], ['C', 5, '620,190 660,110 740,90'],
  ['C', 8, '990,46 940,195'], ['C', 6, '900,70 1050,85'], ['C', 6, '890,115 1045,130'], ['C', 6, '875,165 1030,175'],
  ['C', 12, '590,1568 660,1450 720,1330 840,1130 960,1010 1090,890 1170,828 1280,810 1400,790'], ['C', 7, '200,840 300,890 460,965 580,1020 700,1075 850,1120 970,1195 1120,1270 1250,1310 1400,1335 1568,1350'], ['C', 7, '0,860 150,930 260,1010 420,1090 600,1190 760,1265 900,1330 1050,1410 1200,1475 1320,1485 1440,1510'],
  ['C', 5, '660,1400 720,1450 860,1520 980,1568'], ['C', 5, '1245,835 1140,1000 1060,1100 970,1190'], ['C', 5, '890,880 820,980 745,1090'], ['C', 5, '1200,1055 1145,1160 1090,1250'], ['C', 5, '1090,1155 1150,1195'], ['C', 5, '740,940 815,980'], ['C', 5, '700,1030 765,1070'], ['C', 5, '480,1000 440,1085'], ['C', 5, '700,1080 665,1140'], ['C', 5, '285,1030 140,1220'], ['C', 5, '180,970 150,1060 135,1100'], ['C', 5, '170,1240 230,1280 245,1240 210,1200'],
  ['C', 5, '460,1275 300,1510'], ['C', 5, '470,1110 430,1170'], ['C', 5, '500,1150 450,1200 470,1250'], ['C', 5, '550,1170 510,1230'], ['C', 5, '590,1190 530,1280 560,1350 680,1390'], ['C', 5, '690,1245 665,1290 740,1340'], ['C', 5, '540,1340 500,1460 450,1520 520,1568'], ['C', 5, '480,1450 600,1500'], ['C', 4, '510,1390 640,1440'], ['C', 4, '590,1380 560,1560'], ['C', 5, '1010,880 950,960 1030,940'], ['C', 5, '1130,890 1210,965'], ['C', 4, '960,1000 1020,1020'],
  ['C', 6, '1240,1415 1440,1445'], ['C', 4, '1380,1400 1370,1500'], ['C', 4, '1060,1430 1040,1490'], ['C', 6, '1140,1540 1240,1530'], ['C', 6, '1180,1490 1200,1568'], ['C', 4, '800,1568 790,1530 830,1500'], ['C', 6, '1510,880 1440,1020 1470,1060 1568,1100'],
  ['E', 9, '115,880 20,1020 60,1050 210,1110'], ['E', 8, '0,290 160,310 230,345'], ['E', 12, '690,46 720,90 750,170'], ['E', 5, '950,80 960,110'], ['E', 6, '790,560 810,735'], ['E', 6, '885,560 900,735'], ['E', 4, '845,655 895,655'], ['E', 6, '955,600 950,725'], ['E', 6, '310,500 410,465 415,525'],
  ['E', 10, '690,935 610,1180 520,1390 450,1568'], ['E', 6, '445,950 370,1160 290,1380 210,1568'], ['E', 8, '230,1160 600,1250 800,1310'], ['E', 9, '120,1340 540,1440 900,1540'], ['E', 5, '450,970 690,968'], ['E', 6, '330,960 640,1035 900,1095'], ['E', 8, '510,933 690,933'],
  ['R', 10, '515,440 490,540 430,780 300,1150 280,1230'], ['R', 4.500, '270,515 390,530 520,550 620,530 740,500'], ['R', 5, '250,455 350,465 540,490 650,460 760,435 1100,440'], ['R', 4.500, '740,545 850,500 960,490 1100,500'], ['R', 5, '480,608 600,605 700,580 800,565 1090,570'], ['R', 5, '330,558 490,595'], ['R', 6, '732,400 745,630'], ['R', 9, '470,680 600,660 750,630 900,615 1090,650'], ['R', 9, '820,690 900,720 1000,740 1090,740'],
  ['R', 5, '545,700 555,760 535,820'], ['R', 5, '755,700 760,800 740,860 640,980'], ['R', 5, '760,765 830,775 930,810 1100,850'], ['R', 5, '740,825 860,890 1060,960'], ['R', 4, '930,810 910,870'],
  ['R', 5, '190,710 450,790 600,870 720,900 960,980 1080,1010'], ['R', 5, '190,800 420,850 700,960 930,1030 1060,1060'], ['R', 10, '0,790 200,845 400,920 700,1010 1030,1110'], ['R', 5, '360,980 560,1090 750,1150 960,1200'], ['R', 5, '350,1070 570,1095'], ['R', 5, '960,980 890,1220'], ['R', 5, '780,1110 740,1230'], ['R', 5, '510,1230 540,1180 620,1165'], ['R', 4, '905,570 900,610'],
  ['F', 6, '320,46 360,46 450,118'], ['F', 7, '720,560 725,640'], ['F', 7, '630,560 628,735'], ['F', 6, '725,625 790,628'], ['F', 6, '315,560 315,700'], ['F', 6, '415,560 415,700'],
  ['F', 9, '480,1190 560,1160 620,1120 800,1135 1000,1200 1100,1190 1173,1150'],
  ['F', 8, '820,830 860,870 920,890'], ['F', 7, '1060,782 960,755 900,780 875,810 960,860 1080,910'], ['F', 7, '555,1110 680,1020 780,990 880,1000 1020,1060 1140,1140'], ['F', 6, '600,1140 690,1070 780,1060 900,1100 1040,1115 1090,1090'], ['F', 5, '880,1070 930,1010'], ['F', 6, '785,945 810,970 805,1000'],
  ['F', 7, '612,1165 605,1300 590,1380'], ['F', 6, '620,1185 800,1195 960,1255 1173,1250'], ['F', 6, '620,1230 850,1290 1060,1335'], ['F', 6, '530,1260 850,1330 1030,1350'], ['F', 6, '520,1345 850,1400 990,1440 1173,1420'], ['F', 6, '990,1440 1070,1360 1110,1270'], ['F', 6, '910,1180 840,1330 760,1400'], ['F', 7, '530,1410 700,1440 1173,1540'], ['F', 5, '1173,1180 1170,1250'], ['F', 9, '440,1420 600,1500 900,1560']
]);
el('circle', { cx: 1749, cy: 1376, r: 5.5, fill: '#fff' });

// Main roads
const yellow = [['Q', 12, '510,325 515,370 540,375 655,375 720,420 820,460 920,500 1100,570 1290,650 1560,750 1720,810'], ['C', 12, '100,1540 150,1560 200,1590'],
  ['E', 19, '10,1600 60,1440 130,1265 230,1120 300,1000 303,900 295,700 285,600 262,540 262,400 290,285 370,190 480,110 640,30'], ['E', 15, '10,570 60,440 110,395 300,345 500,318 735,300 900,290'], ['E', 10, '115,400 120,545'], ['E', 7, '100,558 400,535 735,505 900,480'], ['E', 10, '20,1530 300,1568 400,1590'],
  ['F', 19, '478,20 520,140 560,300 550,500 540,700 525,920'], ['F', 13, '510,930 480,1080 465,1250 430,1400 370,1600'], ['F', 13, '530,920 530,1080 515,1250 490,1430 430,1600']];
const orange = [['W', 14, '0,225 170,238 500,242 870,252 1000,265 1150,282 1300,285 1430,262 1568,238'], ['C', 13, '0,240 130,222 215,245 330,320 440,350 560,345 700,325 850,308 950,325 1060,375 1150,455 1230,530 1320,585 1400,612 1480,612 1568,590'],
  ['E', 11, '0,608 250,585 500,560 735,528 900,480'], ['F', 13, '0,430 300,300 500,250 800,170 1000,120 1180,65'], ['F', 13, '700,200 1000,215 1180,210'],
  ['Q', 14, '-10,338 220,340 400,320 600,285 850,245 1000,200 1150,110 1290,0'], ['W', 13, '980,865 1100,790 1240,690 1400,635 1568,590'], ['C', 13, '0,605 300,560'], ['C', 17, '1080,785 1200,775 1330,752 1390,775 1480,840 1568,872'], ['R', 18, '-420,350 -320,385 -220,405 0,408 300,410 550,395 720,375 850,368 1000,378 1120,400 1250,390 1360,340 1450,250 1600,80']];
const red = [['C', 17, '480,362 690,412 850,445 1000,510 1120,590 1200,618 1400,650 1568,680'], ['E', 17, '0,668 140,682 270,700 400,722 560,755 800,758 1200,757'], ['F', 18, '0,757 300,755 500,760 600,768 700,745 790,680 870,570 1000,440 1090,350 1180,305'], ['R', 8, '1010,185 1050,165 1130,180'], ['C', 9, '1188,650 1155,720 1150,760 1190,810'], ['C', 9, '1568,700 1540,760 1515,835']];
const motorway = [['W', 16, '0,1052 230,1053 330,1042 420,1005 540,915 700,845 860,725 1000,668 1100,632 1240,548 1400,475 1568,405'], ['C', 16, '0,458 119,405 200,375 300,352 400,350 500,365 600,390 680,410']];
roads('#fcd6a4', '#b8862a', orange, 'butt');
roads('#f9b29c', '#c9564a', red, 'butt');
roads('#e892a2', '#3b3136', motorway, 'butt');
roads('#f7fabf', '#a3a848', yellow, 'butt');
line('E', '235,540 240,400 265,285 375,185', 1.3, '#333');
line('E', '268,590 272,720 280,940', 1.6, '#333');
line('E', '315,590 322,720 332,940', 1.6, '#333');
line('R', '1137,200 1135,260 1128,340', 1.4, '#333');
line('R', '1192,200 1185,330 1178,440', 1.4, '#333');
line('E', '332,891 540,891', 1.3, '#333');
line('E', '332,920 540,920', 1.3, '#333');
line('R', '1130,335 1010,338 980,365 1000,385 1060,398 1128,398', 1.3, '#333');
line('R', '980,370 1000,410 1100,445', 1.3, '#333');
line('Q', '670,300 950,235 1100,165 1220,80', 1.3, '#333');
line('E', '0,795 100,862 200,895 330,907 640,905', 1.6, '#b48ba8', { 'stroke-dasharray': '14 4 3 4' });
line('F', '640,885 760,830 870,740 1000,595 1173,715', 1.8, '#b48ba8', { 'stroke-dasharray': '14 4 3 4' });
line('C', '310,330 420,395 600,430 720,460', 1.8, '#a488a8', { 'stroke-dasharray': '12 4 3 4' });

// Railway
[['W', '165,205 500,212 870,228 1240,238 1568,225'], ['C', '0,235 119,225 220,250 330,300 450,345 600,325 720,318'], ['C', '0,222 119,212 220,230 330,275 450,322 600,300 780,288 950,310 1080,370 1170,440 1270,525 1380,575 1500,588 1568,583'], ['E', '0,582 120,582 270,570 500,540 735,518 900,470'], ['F', '1085,215 1180,208'], ['F', '1050,118 1180,72']].forEach(([s, p]) => {
  line(s, p, 6, '#6b6b6b');
  line(s, p, 2.2, '#fff', { 'stroke-dasharray': '5 4' });
  line(s, p, 1, '#6b6b6b');
});
line('W', '605,60 600,120 620,170 660,205', 3, '#999', { 'stroke-dasharray': '9 4' });

// Footpaths
[['W', '970,710 1000,800 1020,850'], ['Q', '825,50 870,185'], ['Q', '860,200 905,185'], ['Q', '65,315 70,350'], ['Q', '515,285 525,330'], ['R', '1280,515 1200,550 1175,600 1170,665 1120,690 1115,730 1138,775'], ['R', '995,690 1050,668 1120,688 1180,680 1220,695 1245,680'], ['R', '1300,345 1320,405'], ['F', '1173,1050 1130,1060 1115,1095'], ['F', '930,940 955,955'], ['E', '145,855 128,880'], ['R', '498,410 498,435']].forEach(([s, p]) => {
  line(s, p, 7, '#777'); line(s, p, 5.2, '#f5f2ee'); line(s, p, 1.7, '#fa8072', { 'stroke-dasharray': '4 4' });
});
[['C', '320,95 400,85 460,50'], ['C', '110,370 200,310 230,340'], ['W', '1262,345 1320,325'], ['F', '640,980 700,900 790,880 930,920 920,1000'], ['F', '690,1000 670,960 740,900'], ['F', '960,920 1040,960 1090,1020 1173,1040'], ['F', '1000,900 1000,970'], ['R', '900,655 1000,670'], ['R', '900,690 990,702'], ['R', '1135,520 1130,620'], ['R', '1115,780 1110,950 1080,1110'], ['R', '680,775 740,790'], ['R', '690,800 740,775'], ['R', '760,655 870,655 860,680 790,680'], ['R', '1070,1150 1040,1230']].forEach(([s, p]) => line(s, p, 1.7, '#fa8072', { 'stroke-dasharray': '4 4' }));

// Power lines
const pylons = [['W', '848,46 848,138 845,203 885,222'], ['W', '823,203 845,203'], ['W', '885,222 988,226 1090,226 1195,228 1220,200 1215,130 1212,62'], ['W', '1220,200 1476,222'], ['W', '873,265 880,308 866,330 877,395 866,432 877,482 866,536 874,566 863,630 859,652 799,677 777,692 738,706 685,742'], ['W', '799,619 863,630'], ['W', '727,735 749,771 773,938'], ['W', '235,1075 357,1057 474,1039 688,1006 785,974 888,913 988,840 1084,775 1162,717 1244,660 1322,630 1415,605'], ['W', '1084,265 1158,276 1258,279 1369,261'], ['W', '1515,62 1568,90'],
  ['C', '65,62 154,120 219,156 315,192 411,211 515,221 615,225 697,211 796,200 896,210 992,214 1014,195 1064,207 1295,246 1509,293 1560,318'], ['C', '26,220 130,214 219,262 311,304 330,320'], ['C', '1181,612 1277,641 1390,645 1445,640 1469,605 1502,601'], ['C', '1125,760 1188,796 1445,640'], ['C', '1520,409 1523,482 1520,528'],
  ['E', '106,293 173,319 218,358 119,409 123,482 119,528 106,577 56,605'], ['E', '25,640 97,601 205,580 241,566 273,587 313,634 313,688 475,742 556,753 699,757 866,757 1028,757 1192,757'], ['E', '106,293 313,257 380,242 619,203'], ['E', '335,554 466,543 596,528 713,518'], ['F', '144,757 315,757 504,738 630,731 774,673 837,611'], ['F', '0,110 315,69'], ['F', '1081,108 1173,60']];
pylons.forEach(([s, p]) => {
  el('polyline', { points: pts(s, p).map(q => q.join(',')).join(' '), fill: 'none', stroke: '#888', 'stroke-width': .9 });
  pts(s, p).forEach(([x, y]) => { el('rect', { x: x - 3, y: y - 3, width: 6, height: 6, fill: '#fff', stroke: '#777', 'stroke-width': 1.5 }); el('circle', { cx: x, cy: y, r: 1.1, fill: '#777' }); });
});
line('C', '190,60 195,110 215,160 215,250', 1.6, '#a488a8', { 'stroke-dasharray': '9 4 2 4' });

// Place names
place('W', 515, 323, 17, 'Grupo', '#75587f', 'italic');
place('W', 515, 366, 17, 'XTRA', '#75587f', 'italic');
place('W', 503, 591, 18.5, 'INVISTA', '#75587f', 'italic');
place('W', 43, 537, 18, 'rias', '#75587f', 'italic');
place('W', 46, 587, 18, 'ere', '#75587f', 'italic');
place('C', 1369, 450, 15, 'CEMEX', '#75587f', 'italic');
place('W', 1317, 1113, 22.5, 'San Pedro', '#555');
place('W', 1317, 1184, 22.5, 'Garza García', '#555');
place('F', 527, 818, 17, 'Puente', '#333');
place('F', 527, 866, 17, 'Miravalle', '#333');
place('F', 675, 330, 16, 'Pablo', '#5a5ab0');
place('F', 678, 375, 16, 'G. Garza', '#5a5ab0');
const water = (s, p, t) => label(s, p, t, '#5a8cc4', 400, 'italic');
water('W', '32,965 200,960 382,945', 'Río Santa Catarina');
water('C', '285,420 400,432 520,450 640,475', 'Río Santa Catarina');
water('E', '762,825 960,822 1205,802', 'Río Santa Catarina');

const brown = '#4a3a20';
label('W', '182,222 500,227 872,230', 'Boulevard Licenciado Gustavo Díaz Ordaz', brown);
label('C', '718,328 880,345 1000,378 1120,450 1230,545 1345,590', 'Boulevard Licenciado Gustavo Díaz Ordaz', brown);
label('F', '1097,325 1173,310 1240,295', 'Boulevard', brown);
label('R', '218,400 400,398 600,380 800,368 1045,366', 'Avenida Doctor Ignacio Morones Prieto', brown);
label('W', '385,1035 500,940 640,860 780,790 905,712', 'Autopista de Peaje Monterrey-Saltillo', '#3a2028');
label('C', '1043,235 1200,285 1350,325 1503,355', 'Avenida Manuel Jesús Clouthier');
label('E', '290,550 305,400 348,250', 'Puente Atirantado');
label('F', '524,692 530,540 545,380', 'Calzada San Pedro');
label('F', '392,1568 430,1420 460,1265', 'Calzada San Pedro');
[['W', '292,112 300,46', 'Calle'], ['W', '395,896 478,896', 'Palma'], ['W', '1272,362 1390,350', 'San Juan'], ['W', '1300,442 1453,412', 'Plan del Río'], ['W', '1037,585 1178,495', 'Lucio Blanco'], ['W', '895,975 985,912', 'Jiménez'],
  ['W', '1338,1010 1430,850 1530,725', 'Calle Licenciado Benito'], ['W', '1108,1200 1282,1268', 'Calle Reforma'], ['W', '1282,1355 1502,1436', 'Calle Porfirio Díaz'],
  ['Q', '178,905 215,740 278,548', 'Calle Natividad García'], ['Q', '300,912 350,760 405,600', 'Calle Diego Saldívar'], ['Q', '428,918 465,800 458,682', 'Francisco Siller'], ['Q', '550,930 615,732', 'e Padre Mier'], ['Q', '815,795 870,640 915,505', 'Mariano Jiménez'], ['Q', '862,940 960,700 1018,515', 'Calle José Mariano Abasolo'],
  ['Q', '968,925 1088,600', 'Calle Ignacio Allende'], ['Q', '1075,935 1190,605', 'uel Hidalgo Y Costilla'], ['Q', '1285,930 1335,782', 's Aldama'], ['W', '1380,1560 1412,1445', 'ez Rangel'], ['W', '1455,1568 1480,1505', 'agoza'],
  ['C', '293,46 303,98', 'alle'], ['C', '320,140 400,165 495,175', 'Colina Bonita'], ['C', '468,60 510,120 570,165', 'Colina Real'], ['C', '335,905 440,960 560,1015', 'Callejón Capellanía'], ['C', '160,945 280,1010 405,1080', 'Callejón De Los Ayala'], ['C', '-49,940 60,1000 195,1082', 'Callejón de los Arizpe'],
  ['C', '828,952 878,880', 'San Pa'], ['C', '843,1165 960,1020 1087,925', 'Avenida Santa Bárbara'], ['C', '1060,1078 1175,940', 'Santa Mónica'], ['C', '1008,1240 1120,1280 1247,1312', 'Callejón Capellanía'], ['C', '900,1345 1030,1410 1160,1455', 'Callejón De Los Ayala'], ['C', '720,1455 850,1510 985,1560', 'Callejón de los Arizpe'], ['C', '610,1566 650,1470 715,1360', 'a Santa Bárbara'], ['C', '1040,1550 1082,1452', 'Centaya'], ['C', '1322,1472 1358,1345', 'Río Jordán'], ['C', '790,1568 812,1518', 'lado'],
  ['E', '370,970 612,1025', 'Calle Río Yukón'], ['E', '345,1030 580,1085', 'Calle Río Navia'], ['E', '275,1385 365,1170', 'Calle Río Támesis'], ['E', '418,1220 770,1305', 'Calle Río Amazonas'], ['E', '465,1302 740,1365', 'Calle Río Orinoco'], ['E', '455,1568 525,1390', 'lle Río Bravo'], ['R', '315,1110 370,950 425,795', 'Calle Río Suchiate'], ['E', '598,1470 958,1558', 'Calle Río Mississippi'], ['E', '530,1515 740,1568', 'Calle Río Poto'],
  ['R', '405,475 500,492 605,482', 'Vía Augusta'], ['R', '587,545 787,505', 'Vía Angélica'], ['R', '620,602 780,570 962,558', 'Calle Vía Triumphalis'], ['R', '445,722 600,685 720,680 855,708', 'Calle Fuentes del Valle'], ['R', '640,700 655,770 740,850', 'Vía Caecilia'], ['R', '447,810 730,897', 'Calle Río Missouri'], ['R', '435,870 785,982', 'Calle Río Guadalquivir'], ['R', '350,778 398,792', '8-C'], ['R', '583,1162 630,1005', 'Río Balsas'],
  ['R', '950,130 965,-30', 'Río San Juan'], ['R', '1045,132 1060,-30', 'Río Lerma'], ['F', '430,490 443,370', 'Río Lerma'], ['F', '732,598 745,430', 'Calle Farolles'], ['F', '485,50 505,118', 'Jusni'], ['R', '800,438 1000,422', 'Vía Augusta'],
  ['R', '870,790 1028,830', 'Vía Latina'], ['R', '843,865 985,910', 'Vía Sacra'], ['F', '772,998 943,1025', 'Vía Valeria'], ['F', '778,1062 978,1105', 'Vía Ludovise'], ['F', '615,1112 760,1130 940,1175 1080,1182', 'Avenida Fuentes del Valle'], ['F', '1125,1187 1200,1180', 'Calle'], ['F', '797,1212 990,1255', 'Vía Flaminia'], ['F', '735,1262 927,1308', 'Vía Aremula'], ['F', '648,1298 842,1345', 'Vía Savotino'], ['F', '630,1355 815,1397', 'Vía Asinaria'], ['F', '632,1398 790,1436', 'Vía Borelli'], ['F', '595,1375 618,1188', 'Vía Settembre'], ['F', '993,1378 1055,1340 1108,1275', 'Vía Salaria'], ['F', '1120,1375 1170,1270', 'Vía Cons'],
  ['F', '990,825 1190,945', 'Monte Aventino'], ['F', '940,858 1060,950 1185,1040', '1a de Monte Palatino'], ['F', '997,1492 1173,1530', 'Río Pánuco'], ['F', '970,1528 1200,1575', 'Calle Río Missi'], ['F', '700,1560 800,1575', 'Calle']
].forEach(([s, p, t]) => label(s, p, t));

// Road shields and points of interest
function shield(s, x, y, w, text, fill, stroke) {
  const [[px, py]] = pts(s, `${x},${y}`);
  el('rect', { x: px - w / 2, y: py - 12, width: w, height: 24, rx: 3, fill, stroke });
  el('text', { x: px, y: py + 5, 'font-size': 14, 'text-anchor': 'middle', fill: '#5b5a3c', style: 'stroke:none' }).textContent = text;
}
shield('W', 668, 1190, 22, '8', '#f0eec0', '#c9c98f');
shield('E', 66, 1390, 22, '5', '#f0eec0', '#c9c98f');
shield('E', 234, 883, 31, '20', '#f8e2c4', '#d5b48a');
el('rect', { x: 290, y: 1022, width: 30, height: 44, fill: '#f8e2c4', stroke: '#d5b48a' });
place('W', 36, 208, 14, 'X 4', '#6b5a3c');
place('W', 31, 250, 14, '50', '#6b5a3c');
const [[hx, hy]] = pts('W', '921,310');
el('circle', { cx: hx, cy: hy, r: 10.5, fill: '#bf0000' });
el('path', { d: `M${hx - 6} ${hy}h12M${hx} ${hy - 6}v12`, stroke: '#fff', 'stroke-width': 3.4 });
const [[kx, ky]] = pts('E', '77,1190');
el('text', { x: kx, y: ky + 8, 'font-size': 24, 'font-weight': 600, 'text-anchor': 'middle', fill: '#0092da' }).textContent = 'P';
[['C', 1275, 72], ['C', 1425, 162], ['E', 195, 72]].forEach(([s, x, y]) => {
  const [[a, b]] = pts(s, `${x},${y}`);
  el('path', { d: `M${a - 7} ${b + 8}L${a + 6} ${b - 6}M${a + 7} ${b + 8}L${a - 6} ${b - 6}M${a - 9} ${b - 4}l5-5M${a + 9} ${b - 4}l-5-5`, stroke: '#eee', 'stroke-width': 2 });
});
```
